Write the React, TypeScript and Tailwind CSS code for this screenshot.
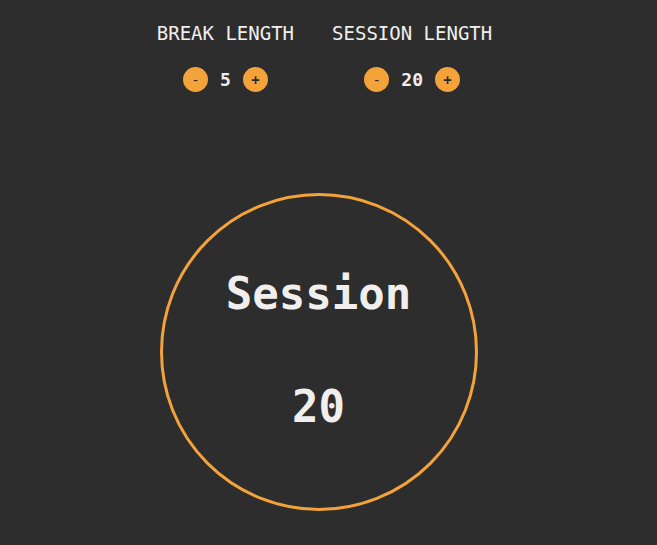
import React, { useState } from "react";

const mono = "font-['DejaVu_Sans_Mono',monospace]";

type LengthProps = {
    label: string
    value: number
    onDec: () => void
    onInc: () => void
}

const LengthControl = ({ label, value, onDec, onInc }: LengthProps) => {
    return (
        <div className="flex flex-col items-center">
            <h2 className="text-[19px] leading-[24px] text-[#f1efee]">{label}</h2>
            <div className="flex items-center gap-[12px] mt-[22px]">
                <button
                    onClick={onDec}
                    className="w-[25px] h-[25px] rounded-full bg-[#f4a23a] text-[#2d2d2d] text-[14px] leading-none flex items-center justify-center"
                >
                    -
                </button>
                <span className="text-[18px] leading-[24px] font-bold text-[#f1efee]">{value}</span>
                <button
                    onClick={onInc}
                    className="w-[25px] h-[25px] rounded-full bg-[#f4a23a] text-[#2d2d2d] text-[14px] font-bold leading-none flex items-center justify-center"
                >
                    +
                </button>
            </div>
        </div>
    );
};

const App = () => {
    const [breakLen, setBreakLen] = useState(5)
    const [sessionLen, setSessionLen] = useState(20)

    return (
        <div className={`min-h-[545px] bg-[#2d2d2d] ${mono} flex flex-col items-center pt-[21px]`}>
            {/* Controls */}
            <div className="flex gap-[38px] mr-[8px]">
                <LengthControl
                    label="BREAK LENGTH"
                    value={breakLen}
                    onDec={() => setBreakLen(Math.max(1, breakLen - 1))}
                    onInc={() => setBreakLen(breakLen + 1)}
                />
                <LengthControl
                    label="SESSION LENGTH"
                    value={sessionLen}
                    onDec={() => setSessionLen(Math.max(1, sessionLen - 1))}
                    onInc={() => setSessionLen(sessionLen + 1)}
                />
            </div>

            {/* Timer */}
            <div className="mt-[101px] mr-[20px] w-[318px] h-[318px] rounded-full border-[3px] border-[#f4a23a] flex flex-col items-center text-[#f1efee] font-bold">
                <div className="text-[44px] leading-[52px] mt-[72px]">Session</div>
                <div className="text-[44px] leading-[52px] mt-[61px]">{sessionLen}</div>
            </div>
        </div>
    );
};

export default App;
